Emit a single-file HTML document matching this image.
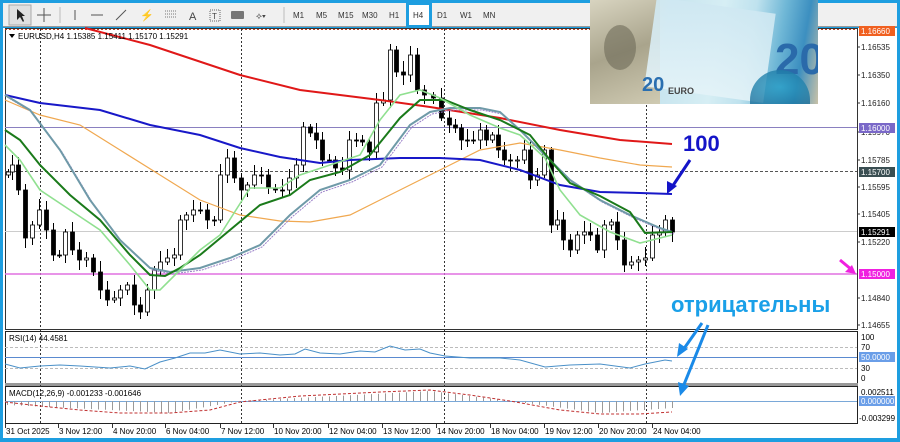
<!DOCTYPE html>
<html><head><meta charset="utf-8"><style>
*{margin:0;padding:0;box-sizing:border-box}
body{width:900px;height:442px;background:#1e9ee0;position:relative;overflow:hidden;font-family:"Liberation Sans",sans-serif;font-size:8px;color:#222}
#tb{position:absolute;left:3px;top:3px;width:894px;height:24px;background:#f0f0f0;border-bottom:1px solid #999}
.tf{position:absolute;top:8px;font-size:8px;color:#333}
#main{position:absolute;left:3px;top:28px;width:894px;height:410px;background:#fff}
svg text{font-family:"Liberation Sans",sans-serif}
#note{position:absolute;left:590px;top:0;width:228px;height:104px;overflow:hidden;
background:linear-gradient(100deg,#cfc9b4 0%,#b8b39c 22%,#d9dccb 27%,#c7e4ee 33%,#d6eef4 55%,#bfe2ee 68%,#6fb7d6 80%,#3c8fc0 90%,#c9c2a8 100%)}
</style></head><body>
<div id="tb">
<svg width="894" height="24" style="position:absolute;left:0;top:0">
<rect x="6" y="2" width="22" height="20" fill="#e0e0e0" stroke="#aaa"/>
<path d="M14 6 L14 17 L17 14 L20 19 L21 18 L19 13 L22 13 Z" fill="#222"/>
<path d="M41 5 V19 M34 12 H48" stroke="#555"/>
<path d="M57 4 V20" stroke="#bbb"/>
<path d="M72 7 V17" stroke="#555"/><path d="M88 12 H100" stroke="#555"/><path d="M113 17 L123 7" stroke="#555"/>
<text x="137" y="16" font-size="11" fill="#555">⚡</text>
<path d="M162 8 H174 M162 11 H174 M162 14 H174" stroke="#777" stroke-dasharray="1 1"/>
<text x="186" y="17" font-size="11" fill="#444">A</text>
<rect x="207" y="7" width="10" height="11" fill="none" stroke="#666" stroke-dasharray="1 1"/><text x="209" y="16" font-size="8" fill="#444">T</text>
<rect x="228" y="8" width="13" height="8" rx="1" fill="#777"/>
<text x="253" y="16" font-size="9" fill="#444">⟡▾</text>
<path d="M281 4 V20" stroke="#bbb"/>
</svg>
<span class="tf" style="left:290px">M1</span><span class="tf" style="left:313px">M5</span><span class="tf" style="left:335px">M15</span><span class="tf" style="left:359px">M30</span><span class="tf" style="left:386px">H1</span>
<div style="position:absolute;left:403px;top:-1px;width:26px;height:26px;border:3px solid #1e9ee0;background:#fff"></div>
<span class="tf" style="left:410px">H4</span><span class="tf" style="left:434px">D1</span><span class="tf" style="left:457px">W1</span><span class="tf" style="left:480px">MN</span>
</div>
<div id="main"></div>
<div id="note">
<div style="position:absolute;left:0;top:0;width:70px;height:104px;background:linear-gradient(160deg,#d8d4c0,#a9a48c 50%,#cfcab2)"></div>
<div style="position:absolute;left:14px;top:25px;width:32px;height:45px;border-radius:50%;background:#6e6a58;opacity:.6"></div>
<div style="position:absolute;left:60px;top:5px;width:120px;height:90px;background:linear-gradient(180deg,#cfe8f2,#e4f3f8);transform:rotate(8deg);opacity:.9"></div>
<div style="position:absolute;left:185px;top:35px;font:bold 44px 'Liberation Sans';color:#2a6aaa">20</div>
<div style="position:absolute;left:52px;top:74px;font:bold 20px 'Liberation Sans';color:#2a6fb0">20</div>
<div style="position:absolute;left:78px;top:86px;font:bold 9px 'Liberation Sans';color:#444">EURO</div>
<div style="position:absolute;left:160px;top:70px;width:60px;height:34px;background:radial-gradient(#2aa0c8,#1b6d99);opacity:.8;border-radius:30px 30px 0 0"></div>
</div>
<script>
let s='<svg width="900" height="442" xmlns="http://www.w3.org/2000/svg" style="position:absolute;left:0;top:0">';
s+='<rect x="5.5" y="28.5" width="852" height="301" fill="#fff" stroke="#333"/>';
s+='<rect x="5.5" y="331.5" width="852" height="52" fill="#fff" stroke="#222"/>';
s+='<rect x="5" y="383" width="853" height="3" fill="#999"/>';
s+='<rect x="5.5" y="386.5" width="852" height="37" fill="#fff" stroke="#222"/>';
s+='<line x1="5" y1="29.5" x2="857" y2="29.5" stroke="#c04020" stroke-dasharray="2 2"/>';
[40,241,444,646].forEach(x=>{s+=`<line x1="${x}.5" y1="29" x2="${x}.5" y2="424" stroke="#333" stroke-dasharray="2 2"/>`});
s+='<line x1="5" y1="127.5" x2="857" y2="127.5" stroke="#8a80c0"/>';
s+='<line x1="5" y1="171.5" x2="857" y2="171.5" stroke="#555" stroke-dasharray="3 2"/>';
s+='<line x1="5" y1="231.5" x2="857" y2="231.5" stroke="#ccc"/>';
s+='<line x1="5" y1="274" x2="857" y2="274" stroke="#e070e0" stroke-width="1.5"/>';
function pl(pts,c,w,extra){return `<polyline fill="none" stroke="${c}" stroke-width="${w}" ${extra||''} points="${pts.map(p=>p.join(',')).join(' ')}"/>`}
const C=[[8,172],[12,165],[18,190],[25,238],[32,225],[39,210],[46,230],[53,255],[59,255],[65,232],[72,250],[79,260],[86,258],[93,272],[100,290],[107,300],[114,298],[120,290],[127,285],[134,305],[140,312],[147,290],[154,270],[160,262],[167,258],[174,255],[180,220],[186,215],[193,210],[200,210],[207,220],[214,220],[220,175],[227,158],[234,178],[241,190],[247,185],[254,175],[261,175],[268,188],[275,190],[282,190],[289,178],[296,165],[303,127],[310,133],[316,140],[322,160],[329,160],[335,168],[342,170],[349,140],[356,140],[362,142],[369,152],[376,103],[383,100],[390,50],[396,72],[403,75],[410,55],[417,90],[424,95],[433,98],[441,118],[449,125],[455,128],[461,140],[467,140],[473,140],[480,130],[486,140],[492,135],[498,150],[504,160],[510,161],[517,160],[524,150],[530,180],[537,175],[544,150],[551,225],[557,220],[563,240],[570,250],[577,235],[584,232],[590,235],[597,250],[604,225],[611,222],[617,240],[624,265],[631,262],[638,260],[645,258],[652,235],[659,232],[665,220],[672,232]];
let prev=175;
C.forEach(([x,c],i)=>{const o=prev;const hi=Math.min(o,c)-3-(i*7%9);const lo=Math.max(o,c)+3+(i*5%8);
s+=`<line x1="${x+.5}" y1="${hi}" x2="${x+.5}" y2="${lo}" stroke="#000"/>`;
const t=Math.min(o,c),h=Math.max(Math.abs(o-c),1);
s+=`<rect x="${x-1.5}" y="${t}" width="4" height="${h}" fill="${c<o?'#fff':'#000'}" stroke="#000" stroke-width="0.8"/>`;prev=c;});
s+=pl([[85,28],[150,45],[240,75],[300,90],[380,100],[430,107],[500,118],[560,130],[620,140],[672,144]],'#e01818',2);
s+=pl([[5,100],[40,115],[80,125],[120,150],[160,175],[200,200],[240,215],[280,221],[310,222],[350,215],[380,200],[410,185],[440,170],[480,150],[520,143],[560,150],[600,158],[640,165],[672,167]],'#f0a850',1.2);
s+=pl([[5,95],[40,103],[100,110],[150,125],[200,135],[240,148],[280,157],[320,163],[350,160],[400,158],[440,158],[480,160],[520,170],[560,185],[600,192],[640,193],[672,194]],'#1818c8',2);
const gb=[[5,95],[30,110],[60,150],[90,200],[120,240],[150,268],[170,272],[200,268],[230,258],[260,245],[290,215],[320,190],[350,180],[380,165],[410,125],[430,112],[450,108],[480,108],[500,112],[520,130],[550,160],[570,180],[600,200],[630,215],[660,228],[672,232]];
s+=pl(gb.map(p=>[p[0]+2,p[1]+2]),'#9a80c8',1,'stroke-dasharray="2 1"');
s+=pl(gb,'#6f9aa8',2);
s+=pl([[5,130],[20,140],[40,165],[70,195],[100,220],[130,255],[150,275],[165,276],[180,268],[200,255],[230,230],[260,205],[290,195],[310,180],[340,172],[370,155],[400,118],[420,100],[445,100],[470,110],[500,120],[530,135],[550,160],[570,183],[600,196],[630,212],[645,233],[672,232]],'#1a7a1a',2);
s+=pl([[5,145],[20,160],[40,190],[70,210],[100,230],[130,265],[150,290],[160,290],[180,270],[200,250],[220,235],[250,188],[280,188],[300,175],[330,165],[360,155],[380,120],[400,95],[420,90],[440,98],[470,115],[500,128],[520,135],[545,158],[560,190],[580,215],[610,232],[640,243],[672,235]],'#90e090',1.6);
s+='<path d="M9 34 L15 34 L12 38Z" fill="#000"/><text x="18" y="39" font-size="8">EURUSD,H4  1.15385 1.15411 1.15170 1.15291</text>';
const lab=[[31,'1.16660','#f06020','#fff'],[47,'1.16535'],[75,'1.16350'],[103,'1.16160'],[132,'1.15970'],[160,'1.15785'],[187,'1.15595'],[214,'1.15405'],[242,'1.15220'],[298,'1.14840'],[325,'1.14655']];
const hl=[[128,'1.16000','#7a68c8','#fff'],[172,'1.15700','#3a4e52','#fff'],[232,'1.15291','#000','#fff'],[274,'1.15000','#f020e0','#fff']];
lab.concat(hl).forEach(l=>{const[y,t,bg,fg]=l;if(bg)s+=`<rect x="859" y="${y-5}" width="36" height="10" fill="${bg}"/>`;else s+=`<line x1="857" y1="${y}" x2="860" y2="${y}" stroke="#333"/>`;s+=`<text x="861" y="${y+3}" font-size="8" fill="${fg||'#222'}">${t}</text>`});
s+='<text x="9" y="341" font-size="8">RSI(14) 44.4581</text>';
s+='<line x1="5" y1="347.5" x2="857" y2="347.5" stroke="#bbb" stroke-dasharray="3 2"/><line x1="5" y1="368.5" x2="857" y2="368.5" stroke="#bbb" stroke-dasharray="3 2"/>';
s+='<line x1="5" y1="357.5" x2="857" y2="357.5" stroke="#5a8ad0"/>';
const rsi=[[5,364],[20,368],[40,366],[60,365],[80,366],[110,368],[130,366],[145,369],[160,362],[175,358],[190,353],[205,353],[220,350],[240,354],[260,353],[280,355],[295,354],[305,349],[320,353],[340,354],[360,351],[375,352],[390,346],[405,350],[420,349],[430,353],[445,356],[470,358],[500,358],[520,360],[545,367],[570,365],[600,364],[630,368],[645,364],[665,360],[672,361]];
s+=pl(rsi,'#4a90c8',1);
[[337,'100'],[347,'70'],[368,'30'],[378,'0']].forEach(([y,t])=>s+=`<text x="861" y="${y+3}" font-size="8">${t}</text>`);
s+='<rect x="859" y="352" width="36" height="10" fill="#6a9ee8"/><text x="861" y="360" font-size="8" fill="#fff">50.0000</text>';
s+='<text x="9" y="396" font-size="8">MACD(12,26,9) -0.001233 -0.001646</text>';
s+='<line x1="5" y1="401.5" x2="857" y2="401.5" stroke="#7aa8d8"/>';
for(let x=7;x<=672;x+=7){let v;if(x<170)v=-(4+ (x-7)/163*8);else if(x<240)v=-12+(x-170)/70*12;else if(x<430)v=(x-240)/190*10;else if(x<510)v=10-(x-430)/80*10;else if(x<600)v=-(x-510)/90*12;else v=-12+(x-600)/72*5;
s+=`<line x1="${x+.5}" y1="401" x2="${x+.5}" y2="${401-v}" stroke="#999"/>`;}
s+=pl([[5,402],[40,406],[80,410],[120,413],[170,413],[210,410],[240,402],[300,396],[380,392],[430,390],[470,395],[510,401],[560,410],[600,414],[640,414],[672,412]],'#c03030',1,'stroke-dasharray="3 2"');
s+='<text x="861" y="395" font-size="8">0.002511</text><rect x="859" y="396" width="36" height="10" fill="#6a9ee8"/><text x="861" y="404" font-size="8" fill="#fff">0.000000</text><text x="859" y="421" font-size="8">-0.003299</text>';
[['31 Oct 2025',5],['3 Nov 12:00',58],['4 Nov 20:00',112],['6 Nov 04:00',165],['7 Nov 12:00',220],['10 Nov 20:00',273],['12 Nov 04:00',328],['13 Nov 12:00',382],['14 Nov 20:00',436],['18 Nov 04:00',490],['19 Nov 12:00',544],['20 Nov 20:00',598],['24 Nov 04:00',652]].forEach(([t,x])=>{s+=`<line x1="${x+.5}" y1="424" x2="${x+.5}" y2="428" stroke="#333"/><text x="${x+1}" y="434" font-size="8">${t}</text>`});
s+='<text x="683" y="151" font-family="Liberation Serif" font-weight="bold" font-size="22" fill="#1414c8">100</text>';
s+='<path d="M690 160 L672 187" stroke="#1414c8" stroke-width="3"/><path d="M667 194 L667 181 L677 186Z" fill="#1414c8"/>';
s+='<text x="671" y="312" font-family="Liberation Serif" font-weight="bold" font-size="22" fill="#1aa0e8">отрицательны</text>';
s+='<path d="M702 323 L683 350" stroke="#1a8ae8" stroke-width="3"/><path d="M677 357 L679 343 L688 349Z" fill="#1a8ae8"/>';
s+='<path d="M708 325 L683 387" stroke="#1a8ae8" stroke-width="3"/><path d="M680 396 L678 382 L689 386Z" fill="#1a8ae8"/>';
s+='<path d="M840 260 L852 270" stroke="#f020e0" stroke-width="3"/><path d="M856 274 L845 272 L852 265Z" fill="#f020e0"/>';
s+='</svg>';
document.body.insertAdjacentHTML('beforeend',s);
document.body.appendChild(document.getElementById('note'));
</script>
</body></html>
